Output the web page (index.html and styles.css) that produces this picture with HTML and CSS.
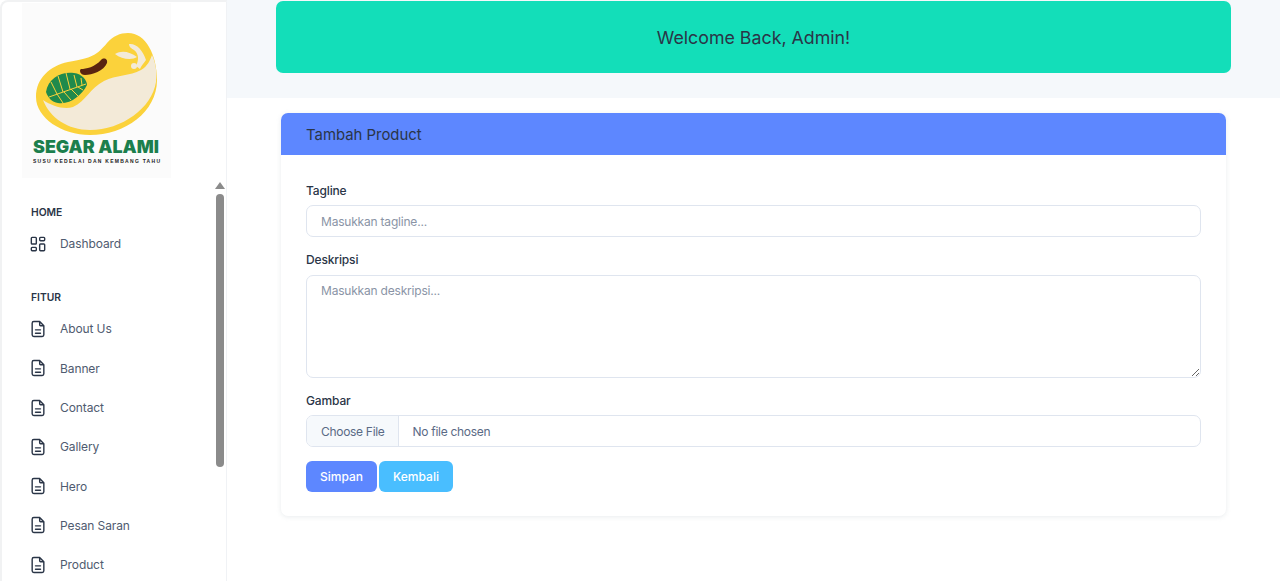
FILE: index.html
```html
<!DOCTYPE html>
<html lang="id">
<head>
<meta charset="utf-8">
<title>Tambah Product</title>
<link rel="stylesheet" href="styles.css">
</head>
<body>
<aside class="sidebar">
  <div class="logo">
    <svg class="logo-art" viewBox="22 3 149 175" width="149" height="175">
      <rect x="22" y="3" width="149" height="175" fill="#fbfbfb"/>
      <path fill="#fbd23b" d="M128 33C146 33 157 55 157 80C157 112 125 135 90 135C62 135 36 118 36 97C36 78 50 66 68 62C92 58 97 55 107 43C113 36 120 33 128 33Z"/>
      <path fill="#f3ead8" d="M43 100C52 106 64 110 73 107C86 101 90 88 104 81C116 75 130 76 141 70C148 66 150 60 152 55C156 64 157 72 156 82C152 108 122 130 90 130C68 130 50 118 43 100Z"/>
      <path fill="#f3ead8" d="M115 54C122 50 130 52 137 57C133 60 122 60 115 54ZM129 44C136 43 143 50 146 60C144 63 141 66 140 69L136 66C139 60 139 54 134 50C131 48 129 47 129 44Z"/>
      <circle cx="134" cy="66" r="3" fill="#f3ead8"/>
      <path fill="#5a2410" d="M81 69C86 69 95 67 101 60C104 57 108 59 107 63C104 71 92 75 85 75C80 75 79 70 81 69Z"/>
      <path fill="#1f8a4c" d="M46 92C48 78 62 71 74 73C82 74 87 80 87 85C82 95 70 105 58 103C52 102 48 98 46 92Z"/>
      <path d="M49 97L86 84M57 94L51 82M63 92L58 76M70 89L66 73M77 87L74 75M82 85L81 78M57 94L63 103M64 92L71 100M71 89L78 96M78 87L83 90" stroke="#fbd23b" stroke-width="1" fill="none"/>
      <text x="33" y="153" class="logo-name" textLength="126" lengthAdjust="spacingAndGlyphs">SEGAR ALAMI</text>
      <text x="33" y="162.500" class="logo-sub" textLength="127" lengthAdjust="spacing">SUSU KEDELAI DAN KEMBANG TAHU</text>
    </svg>
  </div>
  <nav class="nav">
    <div class="nav-title">HOME</div>
    <a class="nav-item">
      <svg class="icon" viewBox="0 0 24 24"><path d="M5 4h4a1 1 0 0 1 1 1v6a1 1 0 0 1-1 1H5a1 1 0 0 1-1-1V5a1 1 0 0 1 1-1M5 16h4a1 1 0 0 1 1 1v2a1 1 0 0 1-1 1H5a1 1 0 0 1-1-1v-2a1 1 0 0 1 1-1M15 12h4a1 1 0 0 1 1 1v6a1 1 0 0 1-1 1h-4a1 1 0 0 1-1-1v-6a1 1 0 0 1 1-1M15 4h4a1 1 0 0 1 1 1v2a1 1 0 0 1-1 1h-4a1 1 0 0 1-1-1V5a1 1 0 0 1 1-1"/></svg>
      <span>Dashboard</span>
    </a>
    <div class="nav-title nav-title-gap">FITUR</div>
    <a class="nav-item"><svg class="icon" viewBox="0 0 24 24"><path d="M14 3v4a1 1 0 0 0 1 1h4M17 21H7a2 2 0 0 1-2-2V5a2 2 0 0 1 2-2h7l5 5v11a2 2 0 0 1-2 2zM9 17h6M9 13h6"/></svg><span>About Us</span></a>
    <a class="nav-item"><svg class="icon" viewBox="0 0 24 24"><path d="M14 3v4a1 1 0 0 0 1 1h4M17 21H7a2 2 0 0 1-2-2V5a2 2 0 0 1 2-2h7l5 5v11a2 2 0 0 1-2 2zM9 17h6M9 13h6"/></svg><span>Banner</span></a>
    <a class="nav-item"><svg class="icon" viewBox="0 0 24 24"><path d="M14 3v4a1 1 0 0 0 1 1h4M17 21H7a2 2 0 0 1-2-2V5a2 2 0 0 1 2-2h7l5 5v11a2 2 0 0 1-2 2zM9 17h6M9 13h6"/></svg><span>Contact</span></a>
    <a class="nav-item"><svg class="icon" viewBox="0 0 24 24"><path d="M14 3v4a1 1 0 0 0 1 1h4M17 21H7a2 2 0 0 1-2-2V5a2 2 0 0 1 2-2h7l5 5v11a2 2 0 0 1-2 2zM9 17h6M9 13h6"/></svg><span>Gallery</span></a>
    <a class="nav-item"><svg class="icon" viewBox="0 0 24 24"><path d="M14 3v4a1 1 0 0 0 1 1h4M17 21H7a2 2 0 0 1-2-2V5a2 2 0 0 1 2-2h7l5 5v11a2 2 0 0 1-2 2zM9 17h6M9 13h6"/></svg><span>Hero</span></a>
    <a class="nav-item"><svg class="icon" viewBox="0 0 24 24"><path d="M14 3v4a1 1 0 0 0 1 1h4M17 21H7a2 2 0 0 1-2-2V5a2 2 0 0 1 2-2h7l5 5v11a2 2 0 0 1-2 2zM9 17h6M9 13h6"/></svg><span>Pesan Saran</span></a>
    <a class="nav-item"><svg class="icon" viewBox="0 0 24 24"><path d="M14 3v4a1 1 0 0 0 1 1h4M17 21H7a2 2 0 0 1-2-2V5a2 2 0 0 1 2-2h7l5 5v11a2 2 0 0 1-2 2zM9 17h6M9 13h6"/></svg><span>Product</span></a>
  </nav>
  <div class="scroll-arrow"></div>
  <div class="scroll-thumb"></div>
</aside>
<main class="main">
  <header class="topband">
    <div class="welcome">Welcome Back, Admin!</div>
  </header>
  <section class="card">
    <h1 class="card-head">Tambah Product</h1>
    <form class="card-body">
      <label class="field-label label-tight" for="tagline">Tagline</label>
      <input class="control input" id="tagline" type="text" placeholder="Masukkan tagline...">
      <label class="field-label" for="deskripsi">Deskripsi</label>
      <textarea class="control textarea" id="deskripsi" placeholder="Masukkan deskripsi..."></textarea>
      <label class="field-label label-tight" for="gambar">Gambar</label>
      <input class="control file" id="gambar" type="file">
      <div class="actions">
        <button class="btn btn-primary" type="button">Simpan</button>
        <button class="btn btn-info" type="button">Kembali</button>
      </div>
    </form>
  </section>
</main>
</body>
</html>
```
FILE: styles.css
```css
* { box-sizing: border-box; }
html, body { height: 100%; }
body {
  margin: 0;
  display: flex;
  overflow: hidden;
  background: #fff;
  color: #2a3547;
  font-family: "Inter", "Liberation Sans", sans-serif;
  font-size: 13px;
}
.sidebar {
  position: relative;
  flex: 0 0 227px;
  height: 581px;
  padding: 3px 0 0 22px;
  background: #fff;
  border-top: 2px solid #f1f2f3;
  border-left: 2px solid #f1f2f3;
  border-right: 1px solid #f0f2f5;
  border-top-left-radius: 8px;
  overflow: hidden;
}
.logo { margin-left: -2px; height: 175px; margin-top: -2px; }
.logo-art { display: block; }
.logo-name { font: 900 17px "Inter", "Liberation Sans", sans-serif; fill: #1c7f4d; }
.logo-sub { font: 700 5px "Liberation Sans", sans-serif; fill: #222; }
.nav { padding: 26px 0 0 7px; }
.nav-title {
  height: 16px;
  margin-bottom: 4px;
  line-height: 16px;
  font-size: 10.300px;
  font-weight: 600;
  color: #2a3547;
}
.nav-title-gap { margin-top: 26px; }
.nav-item {
  display: flex;
  align-items: center;
  gap: 12.500px;
  height: 39.300px;
  color: #4f5b70;
  font-size: 12px;
  letter-spacing: -.1px;
}
.icon {
  flex: 0 0 20px;
  width: 20px;
  height: 20px;
  margin-left: -3.500px;
  fill: none;
  stroke: #2a3547;
  stroke-width: 1.700;
  stroke-linecap: round;
  stroke-linejoin: round;
}
.scroll-arrow {
  position: absolute;
  left: 213px;
  top: 180px;
  width: 0;
  height: 0;
  border-left: 5px solid transparent;
  border-right: 5px solid transparent;
  border-bottom: 7px solid #8b8b8b;
}
.scroll-thumb {
  position: absolute;
  left: 214px;
  top: 192px;
  width: 8px;
  height: 273px;
  border-radius: 4px;
  background: #8b8b8b;
}
.main { flex: 1; min-width: 0; }
.topband {
  height: 98px;
  padding: 1px 49px 0 49px;
  background: #f5f8fb;
}
.welcome {
  display: flex;
  align-items: center;
  justify-content: center;
  height: 72px;
  border-radius: 7px;
  background: #13deb9;
  font-size: 17.800px;
}
.card {
  margin: 15px 54px 0 54px;
  height: 403px;
  border-radius: 7px;
  background: #fff;
  box-shadow: 0 1px 5px rgba(145, 158, 171, .2);
}
.card-head {
  display: flex;
  align-items: center;
  height: 42px;
  margin: 0;
  padding: 1px 25px 0;
  border-radius: 7px 7px 0 0;
  background: #5d87ff;
  color: #2a3547;
  font-size: 14.900px;
  font-weight: 400;
}
.card-body { display: flex; flex-direction: column; padding: 28px 25px 0; }
.field-label {
  height: 16px;
  margin-bottom: 7px;
  line-height: 16px;
  font-size: 12px;
  font-weight: 500;
  letter-spacing: -.15px;
}
.label-tight { margin-bottom: 6px; }
.control {
  display: block;
  width: 100%;
  border: 1px solid #dfe5ef;
  border-radius: 7px;
  background: #fff;
  color: #5a6a85;
  font: 12px "Inter", "Liberation Sans", sans-serif;
  letter-spacing: -.2px;
  outline: none;
}
.control::placeholder { color: #8a94a6; }
.input { height: 32px; margin-bottom: 15px; padding: 0 14px; }
.textarea { height: 103px; margin-bottom: 15px; padding: 7px 14px; resize: vertical; }
.file { height: 32px; padding: 0; overflow: hidden; color: #5a6a85; line-height: 30px; letter-spacing: -.3px; }
.file::file-selector-button {
  height: 30px;
  margin: 0 14px 0 0;
  padding: 1px 13px 0 14px;
  border: 0;
  border-right: 1px solid #dfe5ef;
  background: #f6f9fc;
  color: #5a6a85;
  font: inherit;
  letter-spacing: inherit;
}
.actions { display: flex; gap: 2px; margin-top: 14px; }
.btn {
  height: 31px;
  padding: 0 14px;
  border: 0;
  border-radius: 6px;
  color: #fff;
  font: 450 12px "Inter", "Liberation Sans", sans-serif;
}
.btn-primary { background: #5d87ff; width: 71px; }
.btn-info { background: #49beff; width: 74px; }
```
